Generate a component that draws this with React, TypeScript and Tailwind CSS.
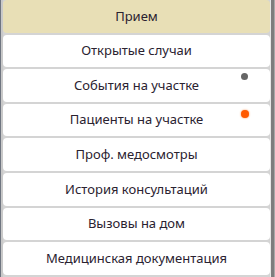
const items = [
  { label: "Прием", active: true },
  { label: "Открытые случаи" },
  { label: "События на участке", dot: "gray" },
  { label: "Пациенты на участке", dot: "orange" },
  { label: "Проф. медосмотры" },
  { label: "История консультаций" },
  { label: "Вызовы на дом" },
  { label: "Медицинская документация" },
]

export default function App() {
  return (
    <div className="flex h-[277px] w-[275px] overflow-hidden bg-[#d4d4d4] font-['Noto_Sans',sans-serif]">
      <div className="w-px shrink-0 bg-[#6f7580]" />
      <div className="w-[2px] shrink-0 bg-[#c9c9c9]" />
      <div className="flex flex-1 flex-col gap-[2px]">
        {items.map((item) => (
          <div
            key={item.label}
            className={`relative flex h-[32.6px] shrink-0 items-center justify-center rounded-[4px] text-[13px] text-[#2a2230] ${
              item.active ? "bg-[#e8dfb6]" : "bg-white"
            }`}
          >
            {item.label}
            {item.dot === "gray" && (
              <span className="absolute right-[22px] top-[4px] h-[7px] w-[7px] rounded-full bg-[#666666]" />
            )}
            {item.dot === "orange" && (
              <span className="absolute right-[21px] top-[6px] h-[8px] w-[8px] rounded-full bg-[#ff5a00] shadow-[0_0_2px_#ff8a40]" />
            )}
          </div>
        ))}
      </div>
      <div className="w-px shrink-0 bg-[#e6e6e6]" />
      <div className="w-[3px] shrink-0 bg-[#7d7d7d]" />
      <div className="w-px shrink-0 bg-[#a8a8a8]" />
    </div>
  )
}
